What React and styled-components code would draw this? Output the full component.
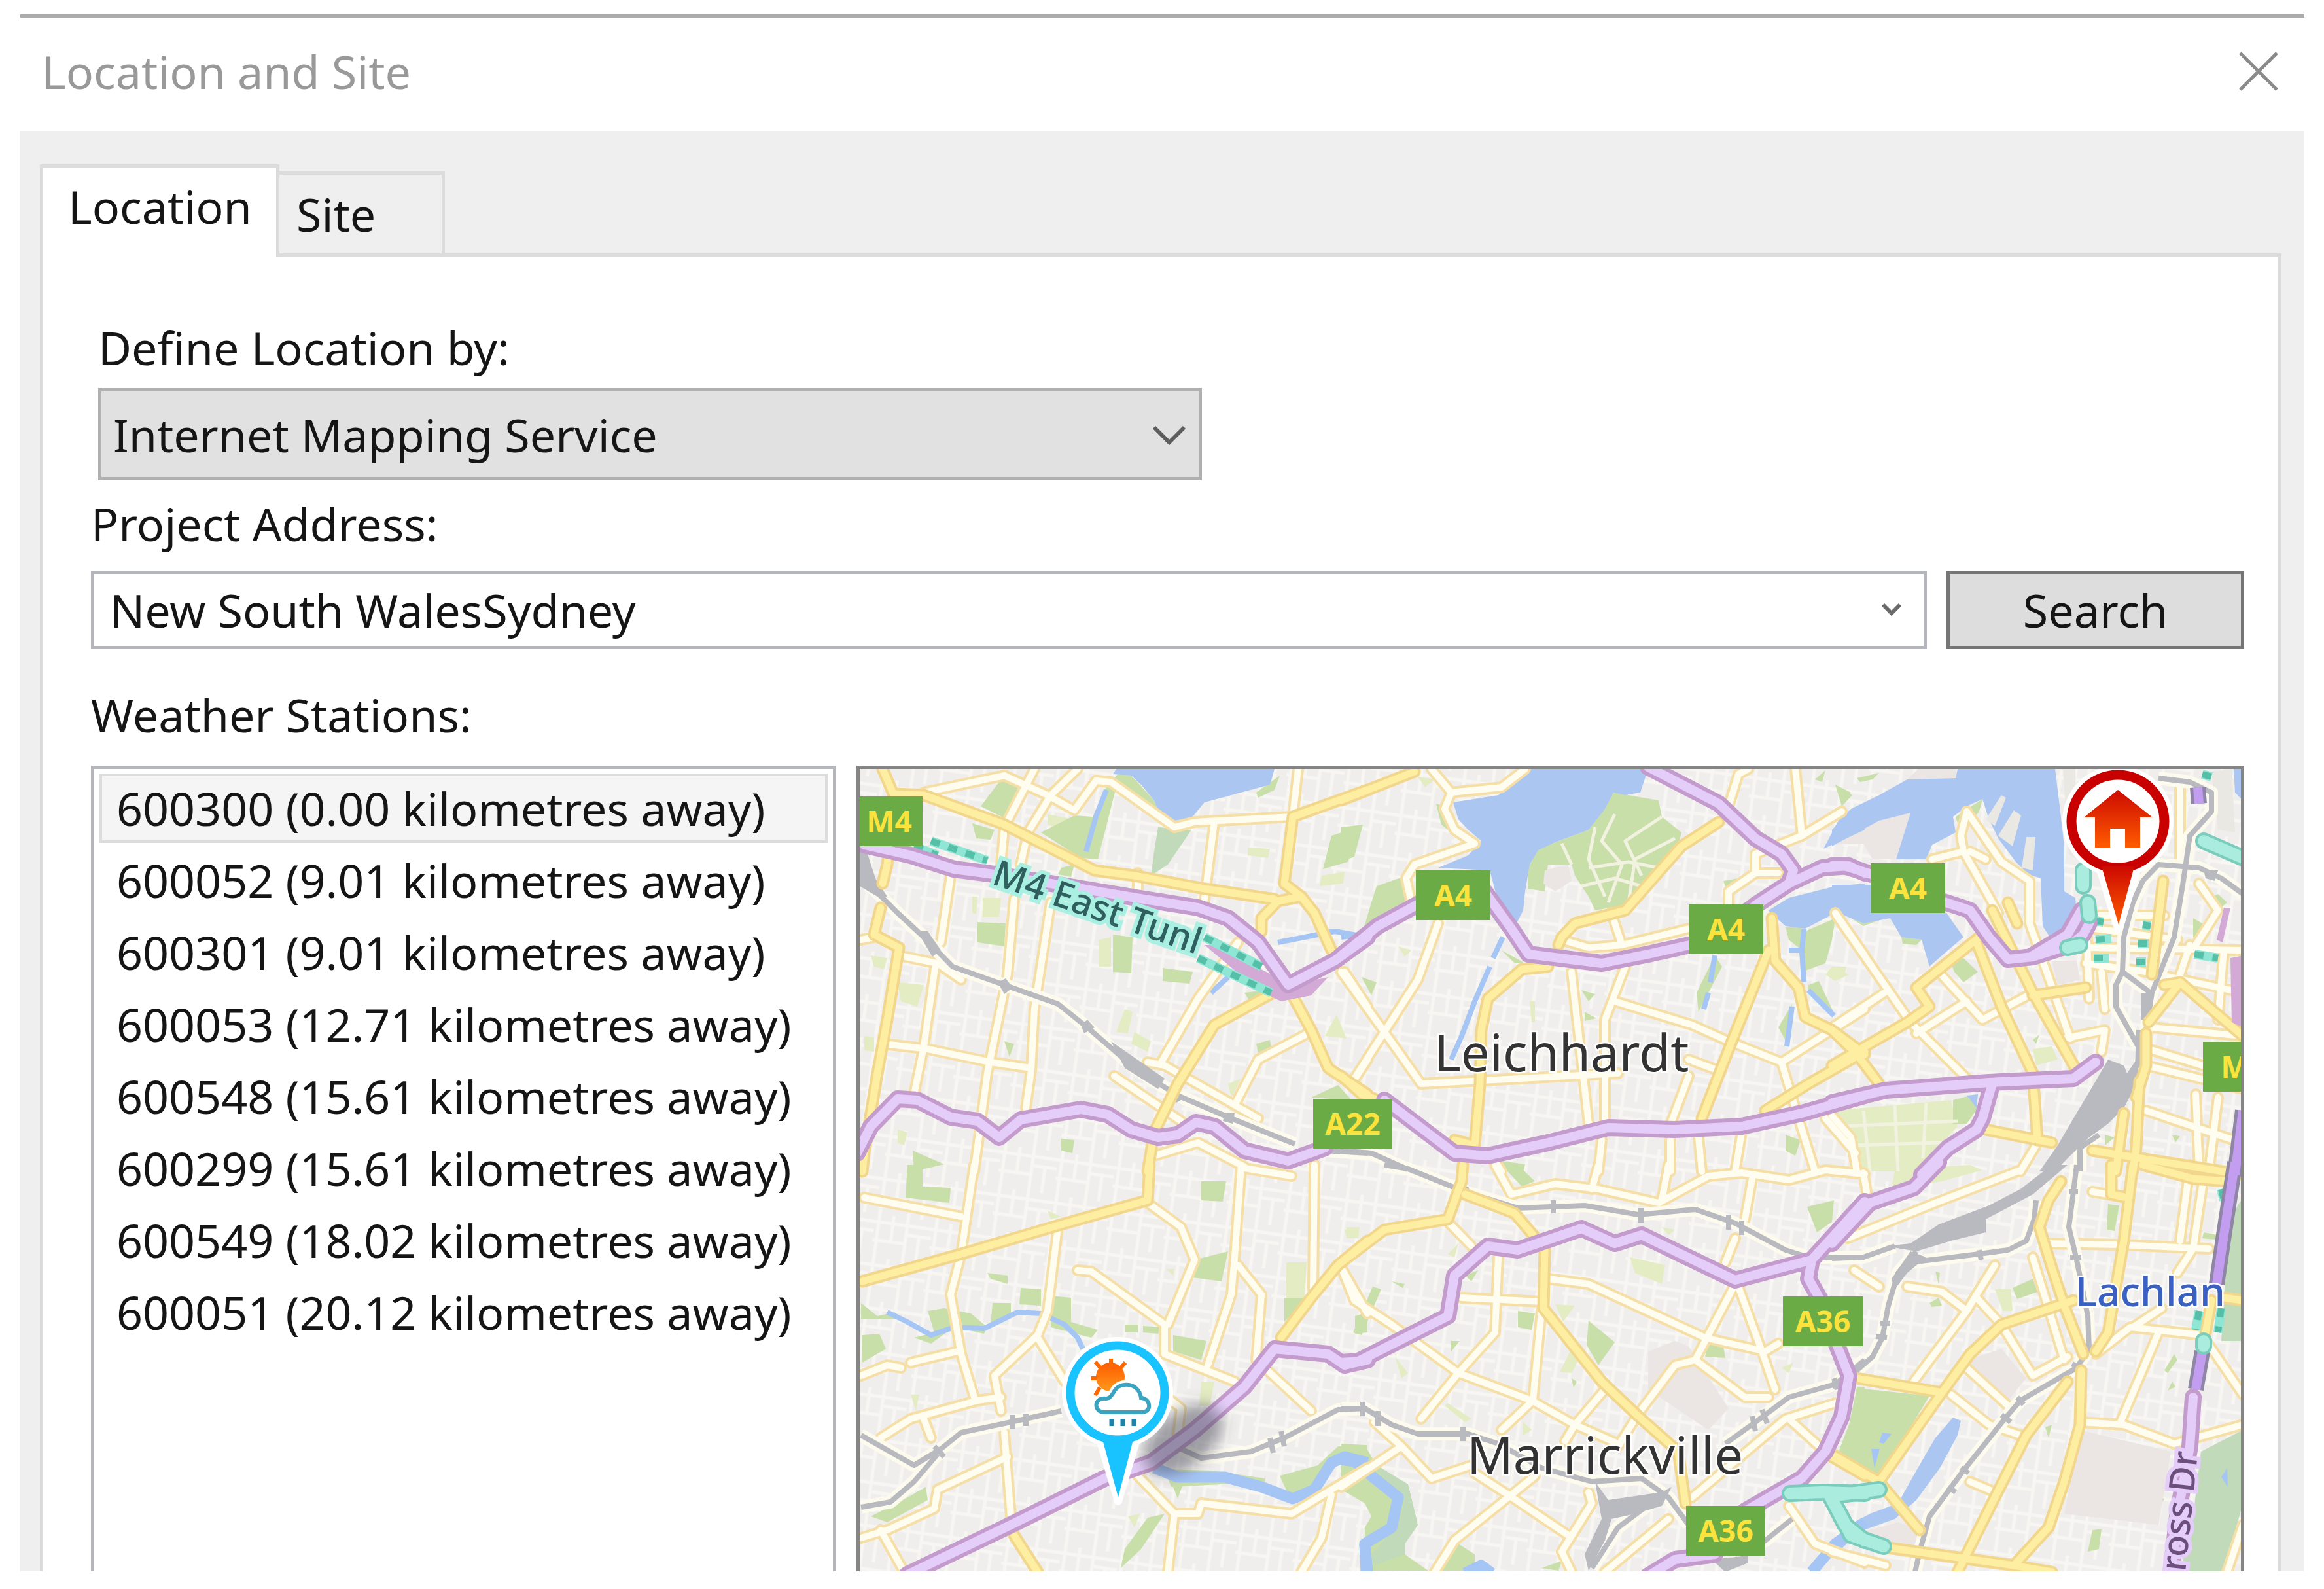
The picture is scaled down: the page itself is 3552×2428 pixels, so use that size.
import { useState } from "react";
import styled, { createGlobalStyle, css } from "styled-components";

const stations = [
    { id: "600300", distance: "0.00" },
    { id: "600052", distance: "9.01" },
    { id: "600301", distance: "9.01" },
    { id: "600053", distance: "12.71" },
    { id: "600548", distance: "15.61" },
    { id: "600299", distance: "15.61" },
    { id: "600549", distance: "18.02" },
    { id: "600051", distance: "20.12" },
];

export default function App() {

    const [service, setService] = useState("Internet Mapping Service");
    const [address, setAddress] = useState("New South WalesSydney");
    const [station, setStation] = useState("600300");

    return (
        <Page>
            <GlobalStyle />
            <Dialog>
                <TitleBar>
                    <Title>Location and Site</Title>
                    <CloseButton type="button" aria-label="Close">
                        <svg width="60" height="60" viewBox="0 0 60 60">
                            <path d="M2 2L58 58M58 2L2 58" stroke="#8a8a8a" strokeWidth="5" />
                        </svg>
                    </CloseButton>
                </TitleBar>
                <Body>
                    <Tabs role="tablist">
                        <Tab type="button" role="tab" aria-selected="true" $active>Location</Tab>
                        <Tab type="button" role="tab" aria-selected="false">Site</Tab>
                    </Tabs>
                    <Panel role="tabpanel">
                        <Service>
                            <Label htmlFor="service">Define Location by:</Label>
                            <SelectBox>
                                <Select id="service" value={service} onChange={(e) => setService(e.target.value)}>
                                    <option>Internet Mapping Service</option>
                                </Select>
                                <SelectArrow width="52" height="34" viewBox="0 0 52 34">
                                    <path d="M3 4L26 27L49 4" fill="none" stroke="#5c5c5c" strokeWidth="6" />
                                </SelectArrow>
                            </SelectBox>
                        </Service>
                        <Address>
                            <Label htmlFor="address">Project Address:</Label>
                            <SearchRow>
                                <Combo>
                                    <Input id="address" value={address} onChange={(e) => setAddress(e.target.value)} />
                                    <ComboButton type="button" aria-label="Recent addresses">
                                        <svg width="32" height="22" viewBox="0 0 32 22">
                                            <path d="M3 3L16 16L29 3" fill="none" stroke="#6b6b6b" strokeWidth="6" />
                                        </svg>
                                    </ComboButton>
                                </Combo>
                                <SearchButton type="button">Search</SearchButton>
                            </SearchRow>
                        </Address>
                        <ListTitle id="stations">Weather Stations:</ListTitle>
                        <Results>
                            <StationList aria-labelledby="stations">
                                {stations.map((s) => (
                                    <li key={s.id}>
                                        <StationButton type="button" $selected={s.id === station} onClick={() => setStation(s.id)}>
                                            {s.id} ({s.distance} kilometres away)
                                        </StationButton>
                                    </li>
                                ))}
                            </StationList>
                            <MapFrame>
                                <StreetMap />
                            </MapFrame>
                        </Results>
                    </Panel>
                </Body>
            </Dialog>
        </Page>
    )
}

// The map is stored in six sheets, each on its own 1568 x 1568 grid
const GRID = 1568;
const sheets = {
    A: [1290, 1150, 800, 640],
    B: [2050, 1150, 800, 640],
    C: [2800, 1150, 752, 640],
    D: [1290, 1780, 800, 648],
    E: [2050, 1780, 800, 648],
    F: [2800, 1780, 752, 648],
};

function project(sheet, points) {
    const [left, top, width, height] = sheets[sheet];
    return points.split(" ").map((p) => {
        const [x, y] = p.split(",").map(Number);
        return `${Math.round(left + x * width / GRID)},${Math.round(top + y * height / GRID)}`;
    }).join(" ");
}

function layer(data) {
    return Object.entries(data).flatMap(([sheet, lines]) => lines.map((l) => project(sheet, l)));
}

const water = layer({
    A: ["870,62 1290,62 1275,120 1160,160 1080,185 1040,245 990,255 940,215 930,180 890,120 860,85 805,80 815,62"],
    B: [
        "560,62 920,62 895,150 850,160 815,150 790,210 740,290 640,335 590,365 565,420 550,520 545,590 525,640 470,560 445,440 290,430 380,385 420,330 380,290 350,250 335,185 470,160",
        "1280,590 1340,545 1480,500 1568,490 1568,600 1480,600 1390,660 1330,650 1285,600",
        "1568,190 1500,230 1445,360 1568,290",
    ],
    C: [
        "400,62 710,62 725,200 740,350 740,520 775,545 780,600 750,660 695,690 672,650 665,470 625,455 585,410 530,320 500,250 480,175 430,200 385,240 395,300 320,345 300,400 205,400 250,225 150,255 0,350 0,290 60,210 150,160 240,100 395,95",
        "0,495 125,495 200,600 365,600 420,690 350,760 310,800 285,700 220,690 185,620 100,640 0,590",
        "1280,62 1310,62 1310,180 1285,150",
        "430,1285 465,1280 460,1330",
    ],
    F: [
        "385,935 410,945 400,1000 345,1120 270,1240 200,1310 90,1355 30,1420 0,1410 40,1340 120,1290 210,1250 270,1130 330,1010",
    ],
});

const ponds = layer({
    F: ["160,990 190,995 165,1030 150,1025", "125,1050 152,1050 135,1120", "1260,1120 1262,1190 1240,1155"],
});

const piers = layer({
    C: ["490,250 540,160 555,170 520,275", "530,310 580,215 602,235 575,350", "605,430 620,315 648,315 640,440", "735,62 775,62 780,400 755,380", "1210,70 1275,62 1285,300 1230,290"],
});

const parks = layer({
    A: [
        "470,100 525,120 480,245 410,200", "385,265 450,290 440,325 395,320",
        "590,300 690,235 745,240 785,130 820,80 860,85 930,180 940,215 815,130 760,400 710,395",
        "1460,310 1550,275 1510,410 1435,435", "400,635 485,640 480,725 400,710",
        "805,680 865,690 860,825 805,820", "955,805 1045,820 1035,865 955,855",
        "1235,150 1305,85 1290,140 1240,170", "1235,1090 1275,1075 1280,1110 1240,1125",
        "205,1490 300,1540 210,1568", "1200,900 1260,890 1215,930", "650,1445 690,1450 685,1500 650,1490",
        "480,1080 510,1090 495,1140", "650,430 690,420 680,465 640,455", "1400,1290 1480,1245 1520,1300",
    ],
    B: [
        "815,150 950,180 960,240 1020,300 1010,350 900,530 850,570 760,590 740,540 700,460 690,420 620,420 610,520 560,510 560,430 590,360 740,290 790,200",
        "105,500 185,465 200,550 65,670 90,560", "0,280 65,270 40,390 0,410",
        "1330,655 1375,655 1390,670 1480,620 1470,700 1450,790 1380,820 1370,730 1340,700",
        "1400,870 1430,855 1475,975 1400,890", "60,840 105,860 90,910", "720,890 760,905 740,930", "730,970 765,995 730,1005",
        "1120,760 1140,800 1070,970 1065,900", "1145,480 1190,470 1160,540", "1310,1030 1350,940 1340,1100",
        "480,740 550,790 520,790", "1330,1430 1375,1450 1360,1510 1330,1490", "480,1530 550,1540 545,1568 490,1568",
        "285,190 310,200 320,290 300,270", "1420,100 1450,65 1440,110", "1480,120 1530,160 1500,200",
    ],
    C: [
        "395,240 480,175 470,220 410,300", "380,790 420,770 465,820 420,860 390,820", "385,1300 440,1285 465,1330 430,1390 385,1390",
        "745,790 770,800 755,835 735,830", "1200,550 1230,530 1260,560 1220,600", "640,1075 660,1055 650,1090",
        "80,95 150,75 130,100 90,110", "10,120 60,150 40,190", "220,690 285,700 270,720 225,715", "1150,620 1180,640 1170,700 1150,690",
        "60,620 100,640 180,615 100,650", "870,1430 900,1440 870,1470", "1085,1430 1110,1435 1095,1460",
    ],
    D: [
        "190,0 235,0 235,80 320,85 315,140 185,120", "1070,60 1145,60 1135,135 1070,130", "1050,350 1150,320 1130,430 1045,415",
        "1320,490 1390,490 1320,580", "50,510 100,560 150,545 180,570 50,570",
        "250,540 300,530 380,550 430,600 420,625 330,600 260,660 210,640 270,620", "445,510 500,510 500,550 440,590",
        "530,455 590,460 590,520 525,515", "620,485 680,490 680,580 760,610 740,640 620,600", "55,630 105,625 125,680 55,730",
        "985,630 1085,650 1070,720 985,690", "840,590 880,590 880,620 840,620", "895,595 950,600 940,625 895,620",
        "80,1300 190,1230 245,1190 250,1240 130,1320", "910,1305 960,1290 890,1420 830,1490 840,1420",
        "960,1125 1100,1130 1260,1160 1260,1180 1130,1180 980,1190", "1305,1150 1420,1110 1480,1040 1568,1035 1568,1100 1470,1080 1400,1200 1330,1220",
        "1500,1200 1568,1170 1568,1240", "1530,560 1568,545 1568,620 1530,625", "430,400 490,410 490,440 440,420", "985,1190 1015,1180 1000,1235",
    ],
    E: [
        "0,1030 70,1035 110,1120 200,1180 230,1330 190,1400 190,1440 260,1500 70,1500 70,1340 90,1300 70,1250 0,1200",
        "350,1400 400,1440 400,1500 300,1500", "740,575 820,655 770,740 735,665", "95,450 120,460 60,630 35,620",
        "530,540 580,550 570,610 530,600", "1395,155 1475,130 1470,210 1425,250", "1100,650 1145,670 1150,715 1090,710",
        "480,0 530,0 580,60 540,80", "150,430 190,440 185,455", "330,650 355,650 330,690", "690,790 705,800 695,825", "600,1490 660,1465 650,1500",
        "1545,820 1568,820 1568,1110 1520,1080", "370,410 410,390 390,430",
    ],
    F: [
        "80,825 310,855 240,990 150,1170 20,1060 55,960", "880,145 915,150 900,245 875,240", "575,455 640,420 655,470 590,495",
        "830,1350 860,1345 850,1420 815,1430", "1060,760 1090,700 1100,720 1070,770", "1070,835 1085,800 1095,820",
        "310,510 340,490 350,520 320,525", "330,395 345,400 340,440", "1185,250 1230,260 1220,275 1180,270", "990,1215 1060,1235 1050,1250 1000,1235",
        "560,800 585,830 550,860", "680,970 700,960 690,1010",
    ],
});

const darkParks = layer({
    A: ["940,280 1040,290 970,420 920,460 930,370"],
    E: ["70,1080 120,1120 200,1180 230,1330 190,1400 190,1440 100,1480 90,1440 170,1330 190,1240 130,1160"],
    F: ["1175,1060 1310,980 1310,1250 1250,1505 1110,1505 1150,1300", "1265,200 1310,120 1310,650 1240,650 1250,500"],
});

const fields = layer({
    A: [
        "385,540 400,540 395,605 385,600", "415,545 470,545 465,615 415,615", "160,860 240,870 220,950 170,930",
        "765,700 800,690 800,800 765,800", "840,960 865,970 850,1050 815,1045", "870,1045 920,1080 910,1120 860,1090",
        "1210,355 1275,360 1270,395 1210,385", "1430,460 1500,445 1495,490 1425,500", "1475,980 1505,1070 1440,1060",
        "610,230 690,250 670,300 610,270", "160,1410 190,1420 180,1470 160,1460", "60,1060 90,1065 90,1120 60,1115", "1150,1240 1190,1220 1160,1290", "80,760 130,770 120,810 90,800",
    ],
    B: ["880,230 940,230 940,400 890,400", "230,90 280,100 250,130", "170,725 210,740 190,765", "1470,800 1520,830 1480,855 1450,830", "595,200 615,215 600,230", "430,310 475,305 470,325", "1520,1360 1568,1330 1568,1420", "565,930 580,930 580,1010 570,1010"],
    C: ["640,1110 700,1100 720,1150 650,1170", "0,1340 380,1300 400,1400 320,1500 260,1568 100,1568 60,1450", "0,800 45,800 40,840 0,850"],
    D: ["1325,360 1385,360 1380,490 1325,490", "1070,800 1110,800 1095,890 1065,890", "1505,230 1545,230 1540,270 1505,270", "965,385 990,385 985,410", "200,850 225,850 215,910", "610,170 650,190 620,200", "850,1300 885,1290 870,1340"],
    E: [
        "640,515 700,520 665,580", "690,680 720,700 690,770 655,765", "865,340 970,370 960,440 880,400", "320,880 390,940 370,950 310,890",
        "160,710 200,770 180,790", "10,240 50,240 45,270 15,265", "960,230 1000,240 980,260", "545,950 570,980 545,1000", "1320,750 1355,730 1340,770", "320,330 350,290 340,340",
    ],
    F: ["520,460 570,460 575,540 545,540", "200,20 440,0 480,20 350,60 190,90"],
});

const blocks = layer({
    B: ["610,440 680,420 690,480 640,520 605,490"],
    C: ["0,345 150,255 250,225 205,400 130,400 100,340", "275,62 395,62 395,95 240,100", "700,780 780,780 790,850 720,870"],
    E: ["920,690 1000,650 1040,670 1160,900 1100,980 920,830"],
    F: ["790,980 1080,1060 1040,1330 740,1290", "430,720 540,680 620,790 560,870", "210,1320 290,1350 270,1430 60,1370"],
});

const creeks = layer({
    A: ["785,140 755,240 725,370", "1300,710 1380,690 1470,670 1568,690", "1150,840 1100,900"],
    B: ["0,690 60,680", "485,690 455,770", "445,800 400,930 360,1060 330,1150", "1400,890 1475,985", "1100,900 1085,960", "1120,760 1105,860", "1385,660 1380,740 1340,740", "1380,740 1385,860", "1350,950 1335,1100"],
    D: ["130,545 190,580 260,630 330,600 420,605 520,545 590,550 660,590 700,640 715,680"],
});

const rivers = layer({
    D: ["930,1120 1000,1155 1140,1155 1250,1190 1345,1235 1410,1200 1460,1100 1500,1080 1568,1100", "1560,1400 1568,1505"],
    E: ["0,1090 40,1095 100,1160 170,1230 150,1340 70,1400 75,1505", "370,1510 420,1480 450,1510", "1568,1320 1480,1400 1410,1505"],
});

const rails = layer({
    A: ["50,400 80,500 160,600 240,690 325,800 480,870 640,940 730,1030 870,1180 1000,1285 1160,1370 1350,1465", "1440,1490 1568,1500"],
    B: ["0,1490 90,1500 200,1560"],
    C: [
        "1000,990 1015,900 925,820 930,690 960,560 990,480 1040,420 1170,430 1240,470 1310,530",
        "1040,95 1140,110 1210,150 1210,220 1140,310 1120,480 1090,690 1020,900 1000,1040 980,1180",
        "925,820 905,870 905,950 975,1100", "790,1568 790,1480 850,1430",
    ],
    D: ["50,1000 210,1110 290,1050 350,990 500,950 650,910", "50,1265 140,1245 210,1170 280,1070", "1010,1050 1070,1085 1220,1060 1320,1010 1480,905 1568,900"],
    E: [
        "130,0 200,15 370,100 530,160 730,150 890,185 1060,165 1180,215 1330,315 1400,340 1568,340",
        "1150,1030 1240,950 1340,860 1480,810 1568,720", "0,900 70,900 150,960 230,995 380,995 470,1030 600,1120 750,1170 900,1160 980,1230 1040,1330",
        "960,1220 830,1340 750,1490", "1350,1310 1270,1390 1180,1440",
    ],
    F: [
        "0,345 100,340 200,300", "780,0 770,100 755,230 780,350 815,560 820,680 780,750 600,870 550,940 420,1130 310,1300 280,1430 265,1505",
        "250,360 470,330 560,315 620,280 645,200 650,130", "270,320 210,400 180,520 160,640 130,710 80,760 0,820",
    ],
});

// Platforms and sidings drawn across the rails
const stops = layer({
    D: ["505,925 505,975", "545,920 545,965", "1275,1010 1285,1065", "1310,985 1320,1040", "270,1040 300,1080"],
    E: ["635,130 635,180", "897,160 897,215", "1160,185 1160,240", "1200,205 1200,260", "65,875 65,930", "110,910 110,965", "365,970 365,1020", "1230,930 1240,985", "1260,905 1275,955", "1475,790 1485,830"],
    F: ["470,315 475,350", "755,100 785,100", "760,340 795,340", "765,735 795,755", "590,860 610,885", "540,925 570,950", "410,1120 435,1140", "370,1190 395,1210", "155,585 185,585", "140,635 175,640"],
});

const yards = layer({
    A: ["47,360 70,380 95,470 130,540 100,540 47,500", "220,670 250,670 290,740 265,765", "460,860 485,845 505,880 480,905", "710,1020 730,1000 750,1030 720,1050", "800,1080 960,1220 940,1260 840,1180", "975,1275 1000,1265 1015,1295 995,1310", "1140,1350 1170,1350 1165,1390 1135,1380"],
    C: ["660,1568 720,1470 770,1370 840,1230 880,1150 930,1170 940,1200 975,1140 975,1230 930,1330 880,1390 820,1440 750,1520 710,1568", "985,900 1015,900 1010,1000 985,1000", "970,1040 1010,1040 1000,1160 965,1180", "1185,440 1230,440 1220,480 1190,470"],
    E: ["760,1170 800,1240 960,1210 990,1190 960,1260 880,1290 810,1310 790,1390 740,1500 730,1440 780,1310", "1110,1460 1220,1445 1220,1470 1150,1505", "350,85 380,80 390,115 365,120"],
    F: ["170,300 250,290 340,220 500,150 600,90 700,0 750,0 640,110 490,200 490,250 380,280 270,320", "250,320 300,340 240,400 200,460 190,420"],
});

const minorRoads = layer({
    A: [
        "240,150 480,85", "480,85 610,160 690,215 755,105 800,110 990,280 1050,260 1340,240", "570,62 480,280 470,420",
        "700,62 620,160 550,300 530,420", "1360,62 1345,240", "1110,260 1080,550", "880,450 880,510", "320,460 290,710",
        "510,550 490,830 430,1200 390,1568", "620,560 570,960 560,1190 545,1330", "50,700 90,690", "165,760 280,790 350,850",
        "275,790 240,1100 210,1280", "120,1090 250,1110 440,1160 560,1180", "1180,710 1060,920 950,1160", "910,1160 960,1170 1240,1370",
        "810,1210 1010,1380", "1390,1050 1240,1150 1175,1310", "1500,820 1568,950", "930,1510 1060,1460 1200,1550", "1568,1150 1520,1240",
    ],
    B: [
        "270,62 330,150 480,130 550,62", "330,150 310,210 340,290 400,340 220,420 195,470 210,560", "290,640 230,850 30,1240",
        "0,820 120,1030 240,1240 830,1200", "690,820 740,1390", "850,800 790,1000 790,1390", "810,600 840,720", "660,700 740,730 840,720 1040,660",
        "820,930 1050,1020 1160,1080 1320,1160 1568,960", "1320,1160 1350,1290 1420,1568", "1040,1210 990,1380", "1040,1150 1130,1190",
        "780,1450 770,1568", "985,1450 985,1568", "1070,1440 1080,1568", "1200,1420 1180,1568", "1220,62 1190,80 1160,200",
        "1360,62 1380,310 1500,220", "1380,310 1240,380 1240,450 1160,520 1160,570", "1240,450 1310,450", "1480,600 1568,760", "460,1530 480,1568", "1450,1370 1540,1500",
    ],
    C: [
        "430,220 410,310 420,370 320,400", "430,220 540,410 630,480 630,640 760,1070", "420,370 530,600", "440,370 490,400",
        "15,610 250,1010 430,1220", "340,820 480,1000 640,900", "0,1030 180,890", "270,1050 430,930", "740,1070 870,1040 860,1120",
        "0,1360 60,1440 80,1568", "840,610 1060,610", "840,660 1100,700", "820,730 1310,740", "810,790 1000,820 1310,900",
        "1020,1030 1310,1060", "1010,1110 1180,1170", "1000,1170 1310,1260", "1000,1340 1280,1450", "1160,1280 1170,1568",
        "1230,1290 1200,1568", "1140,720 1100,860", "1170,490 1230,590 1160,720", "1250,740 1230,1000", "810,560 820,920",
        "860,820 870,960", "600,1568 650,1470", "1110,120 1110,400",
    ],
    D: [
        "390,0 350,330 320,480 350,700 390,860", "60,120 350,190", "640,230 610,540 580,630 450,780 470,910", "580,640 660,800",
        "700,390 740,395 960,590 960,700 1170,800", "910,140 1010,230 1050,350 970,590", "1190,0 1170,340 1160,480 1090,740",
        "1180,370 1250,480 1235,720 1400,910", "1410,0 1405,460", "1190,10 1340,40", "1490,380 1568,550", "50,780 130,740 170,750",
        "200,730 340,690", "110,1010 200,940 400,870 470,860", "240,940 260,1010", "480,990 500,1300", "490,1080 280,1200 270,1270 130,1350 50,1380",
        "110,1350 180,1505", "880,1150 990,1290 970,1505", "990,1290 1060,1290 1070,1250 1340,1290 1568,1120", "1460,1220 1430,1380 1370,1505",
        "980,870 1010,900 1000,1000",
    ],
    E: [
        "0,380 40,500 150,590 350,770 570,870 700,960 830,1030", "320,210 390,300", "470,340 460,620 350,770 240,940", "360,490 600,505",
        "600,540 575,870 480,980", "620,420 740,440 1090,640 1270,690 1310,660", "1180,440 1060,720 1000,740 890,920 830,1040",
        "1190,450 1260,690 1300,830", "1060,720 1210,860 1280,860", "790,830 700,960 670,1020",
        "460,0 510,110 640,70 770,90 950,140 1100,40 1200,30 1340,55 1450,20 1568,35", "770,0 750,90", "980,0 960,130", "1230,50 1210,200",
        "1180,270 1150,360", "100,950 180,1040 270,1160 390,1110", "0,1190 180,1040", "400,1140 500,1220 680,1370", "580,1150 340,1390 280,1505",
        "740,1210 750,1250 660,1430 690,1505", "790,1505 980,1310", "1050,1230 1330,940 1480,880", "1340,940 1440,1050", "1340,1260 1420,1400 1568,1470",
    ],
    F: [
        "100,30 110,100", "240,450 350,470 430,540 460,480 520,370", "430,540 260,800", "460,490 540,590 640,780 750,710",
        "640,340 740,720", "70,390 150,450", "50,270 330,140 600,20", "680,290 920,295 1200,310", "1140,0 1110,280", "1190,0 1150,310 1100,400",
        "830,100 940,120", "790,950 930,960 1090,1030 1310,960", "1040,620 920,950", "840,700 950,600 1180,630 1310,850", "380,850 500,960 600,1000",
        "420,740 560,890", "960,600 1050,530", "0,1430 170,1480", "440,1170 520,1210", "1310,1330 1260,1505",
    ],
});

const mainRoads = layer({
    A: [
        "115,62 150,165 130,420 115,490", "150,155 240,160 480,270 750,440 870,460 1080,510 1290,550",
        "1568,140 1345,240 1320,490 1370,540 1410,600 1460,740", "1370,540 1300,555 1250,620 1250,670", "1330,880 1400,1040 1450,1180 1568,1280",
        "1300,890 1110,1020 1000,1240 930,1420 910,1568", "110,580 90,680 165,730 130,1000 100,1200 60,1500 55,1568",
    ],
    B: [
        "0,180 220,70", "1130,260 1020,350 850,590 700,640 660,690 650,720", "620,800 540,810 440,920 420,1040 415,1240 400,1470 340,1450",
        "1290,620 1300,780 1370,880 1390,990 1470,1040 1568,1130", "1280,740 1170,1080 1080,1370", "1270,1340 1400,1240 1568,1120", "0,1210 60,1280 110,1300",
    ],
    C: [
        "0,1170 240,1010 310,950 270,880 470,690", "510,590 640,900 780,1190", "460,710 540,950 640,1200 655,1450", "640,910 810,880",
        "0,1040 80,1130 150,1240", "490,1410 700,1460", "560,560 590,640", "1060,870 1110,860 1310,1060", "1110,860 1010,1010", "1055,480 1020,830",
        "980,1230 970,1480 960,1568", "930,1350 905,1568", "830,1490 1310,1580", "1000,1050 1000,1170 970,1290",
    ],
    D: ["55,430 350,330 650,220 910,130 915,0", "1568,280 1480,370 1400,490 1310,640", "510,1370 580,1505"],
    E: ["365,0 360,60 320,200 130,240 0,360", "370,110 520,180 610,310 605,530 780,800 890,930 1010,1060 1030,1250", "1470,1080 1568,1150"],
    F: [
        "890,0 890,110 940,120", "960,0 930,280 880,620 840,690", "990,0 1150,50 1260,60", "730,60 690,130 660,230 700,380 740,520 800,700",
        "795,760 790,960 740,1170 690,1340 580,1480", "770,500 540,590 440,700 340,860 150,1170", "80,790 340,840", "0,1070 150,1170 280,1350",
        "750,800 620,1000 520,1230 400,1505", "180,1415 580,1480 700,1505", "1210,500 1190,620", "1250,490 1310,500",
    ],
});

const highways = layer({
    A: [
        "60,345 200,385 330,435 450,455 620,490 900,550 1060,580 1150,620 1240,710 1330,870 1470,780 1568,690",
        "40,1500 80,1400 160,1295 220,1300 320,1365 400,1380 465,1440 530,1375 710,1335 790,1355 860,1410 940,1440 1000,1430 1055,1385 1110,1400 1200,1490 1330,1530 1440,1480",
    ],
    B: [
        "0,760 110,650 240,560", "430,520 510,660 560,755 780,790 920,755 1060,715", "920,55 1130,190 1240,320 1320,380 1355,440 1340,490 1220,590",
        "1240,570 1340,490 1440,430 1520,425 1568,450", "130,1300 340,1500 440,1510 620,1460 800,1405 1000,1410 1200,1400 1380,1350 1568,1285",
    ],
    C: ["0,425 40,425 140,460", "350,555 440,590 500,690 560,775 640,765 760,720 800,680 820,640", "640,760 750,680 795,590", "0,1310 170,1265 500,1235 770,1220 840,1160", "510,1240 480,1370 460,1410 370,1480 285,1580"],
    D: ["1568,720 1500,740 1450,700 1290,680 1200,820 1050,980 920,1100 780,1160 500,1330 190,1515"],
    E: [
        "1568,135 1410,350 1180,425 900,260 820,290 720,235 530,315 440,300 340,410 320,560 50,725 0,730", "1410,350 1400,420 1440,510",
        "1480,650 1520,780 1500,930 1450,1060 1380,1160 1210,1280", "1120,1440 1000,1460 920,1520",
    ],
    F: ["340,-10 260,85 120,140 0,290", "1150,860 1140,1040 1100,1300 1080,1515"],
});

const expressways = layer({
    C: ["1310,1340 1285,1580", "1165,130 1170,190"],
    F: ["1285,-10 1250,260 1225,440", "1180,690 1160,830"],
});

const tunnels = layer({
    C: ["1185,330 1320,400", "800,440 800,500", "815,560 820,610", "750,730 790,720"],
    E: ["1345,1215 1440,1210 1568,1215", "1460,1215 1510,1330 1568,1390"],
    F: ["0,1225 150,1200", "0,1240 20,1280 60,1370 165,1410", "1185,650 1185,670"],
});

const tunnelWalls = layer({
    A: ["180,385 215,385", "210,350 280,385", "260,330 430,405", "1080,690 1250,800", "1060,770 1280,900"],
    C: ["840,630 865,635", "840,700 890,695", "835,770 885,770", "990,645 1015,650", "975,715 1010,715", "970,785 1000,785", "1155,755 1230,770", "1180,80 1210,90"],
    F: ["1240,90 1250,130", "1170,540 1160,610", "1240,530 1230,620"],
});

const ramps = layer({
    A: ["1080,720 1110,720 1340,870 1450,840 1400,910 1310,930 1240,890"],
    C: ["1270,770 1310,760 1310,1030 1275,1010", "1250,580 1270,580 1245,710 1225,700"],
});

const lanes = layer({
    B: ["760,280 740,400 790,540", "820,230 780,330 840,420 800,560", "960,240 850,330 900,460", "1000,320 880,400 860,560", "660,340 690,420", "740,430 860,410 950,430", "720,500 820,470 900,500"],
    C: ["100,1340 120,1568", "200,1320 210,1568", "300,1310 290,1520", "30,1400 400,1380", "60,1470 350,1460"],
});

// Shield: left, top, width, text
const shields = [
    [1308, 1217, 102, "M4"],
    [2164, 1330, 114, "A4"],
    [2581, 1382, 114, "A4"],
    [2859, 1319, 114, "A4"],
    [2007, 1679, 121, "A22"],
    [3367, 1592, 98, "M"],
    [2725, 1981, 122, "A36"],
    [2577, 2301, 121, "A36"],
];

function Lines({ points, color, width, cap = "butt", dash }) {
    return (
        <g fill="none" stroke={color} strokeWidth={width} strokeLinejoin="round" strokeLinecap={cap} strokeDasharray={dash}>
            {points.map((p, i) => <polyline key={i} points={p} />)}
        </g>
    )
}

function Areas({ points, color }) {
    return <g fill={color}>{points.map((p, i) => <polygon key={i} points={p} />)}</g>
}

function StreetMap() {
    return (
        <MapCanvas viewBox="1314 1175 2111 1226" preserveAspectRatio="xMinYMin slice">
            <defs>
                <pattern id="streets" width="88" height="66" patternUnits="userSpaceOnUse" patternTransform="rotate(8)">
                    <rect width="88" height="66" fill="#f0eeec" />
                    <path d="M6 0V66M28 0V40M50 0V66M70 26V66M0 12H88M0 40H50M50 26H88" stroke="#f7f6f3" strokeWidth="5" />
                </pattern>
                <linearGradient id="house" x1="0" y1="0" x2="0" y2="1">
                    <stop offset="0" stopColor="#cc0a00" />
                    <stop offset="1" stopColor="#ff5c00" />
                </linearGradient>
                <linearGradient id="sun" x1="0" y1="0" x2="0" y2="1">
                    <stop offset="0" stopColor="#ff5a00" />
                    <stop offset="1" stopColor="#ff9a1a" />
                </linearGradient>
                <filter id="soft" x="-50%" y="-50%" width="200%" height="200%">
                    <feGaussianBlur stdDeviation="11" />
                </filter>
            </defs>
            <rect x="1314" y="1175" width="2111" height="1300" fill="url(#streets)" />
            <Areas points={fields} color="#e4ecc3" />
            <Areas points={parks} color="#c9dfaa" />
            <Areas points={darkParks} color="#c1dab9" />
            <Areas points={blocks} color="#ebe5e3" />
            <Lines points={lanes} color="#f2f2e0" width="5" />
            <Areas points={water} color="#abc7f1" />
            <Areas points={ponds} color="#a5c5f5" />
            <Areas points={piers} color="#eae8e2" />
            <Lines points={creeks} color="#a5c5f5" width="8" />
            <Lines points={rivers} color="#a5c5f5" width="17" />

            <Lines points={minorRoads} color="#f5dfa6" width="18" cap="round" />
            <Lines points={minorRoads} color="#fffdf0" width="10" cap="round" />
            <Lines points={rails} color="#fdfbee" width="20" />
            <Lines points={rails} color="#b9b9c0" width="8" />
            <Lines points={stops} color="#b9b9c0" width="8" />
            <Areas points={yards} color="#b9b9c0" />
            <Lines points={mainRoads} color="#f1d68c" width="19" cap="round" />
            <Lines points={mainRoads} color="#feeea2" width="11" cap="round" />
            <Areas points={ramps} color="#d3a9d6" />
            <Lines points={tunnelWalls} color="#8fe6d4" width="14" />
            <Lines points={tunnelWalls} color="#56bfa8" width="10" dash="14 14" />
            <Lines points={highways} color="#c49bcd" width="26" cap="round" />
            <Lines points={highways} color="#e4cdf8" width="14" cap="round" />
            <Lines points={expressways} color="#8f86a6" width="24" />
            <Lines points={expressways} color="#c39ef0" width="14" />
            <Lines points={tunnels} color="#7accbc" width="26" cap="round" />
            <Lines points={tunnels} color="#aaecdd" width="18" cap="round" />

            {shields.map(([x, y, w, name]) => (
                <g key={`${x}-${y}`}>
                    <rect x={x} y={y} width={w} height="76" fill="#6aab45" />
                    <ShieldText x={x + w / 2} y={y + 55}>{name}</ShieldText>
                </g>
            ))}

            <Town x="2192" y="1637">Leichhardt</Town>
            <Town x="2242" y="2252">Marrickville</Town>
            <WaterName x="3172" y="1996">Lachlan</WaterName>
            <TunnelName transform="translate(1514 1350) rotate(19)">M4 East Tunl</TunnelName>
            <RoadName transform="translate(3340 2402) rotate(-84)">ross Dr</RoadName>

            <ellipse cx="1808" cy="2200" rx="70" ry="42" transform="rotate(-38 1808 2200)" fill="#4a4a58" opacity="0.5" filter="url(#soft)" />
            <StationPin />
            <HomePin />
        </MapCanvas>
    )
}

function StationPin() {
    return (
        <g>
            <path d="M1680 2196L1709 2294L1738 2196Z" fill="#19c3ff" stroke="#fff" strokeWidth="12" strokeLinejoin="round" />
            <circle cx="1708" cy="2128" r="72" fill="#fff" stroke="#fff" strokeWidth="26" />
            <circle cx="1708" cy="2128" r="72" fill="#fff" stroke="#19c3ff" strokeWidth="13" />
            <path d="M1684 2196L1709 2288L1733 2196Z" fill="#19c3ff" />
            <circle cx="1697" cy="2104" r="22" fill="url(#sun)" />
            <path d="M1698 2088V2076M1682 2090L1674 2081M1713 2090L1720 2082M1677 2106H1667M1681 2120L1674 2132" stroke="#ff6a00" strokeWidth="6" />
            <path
                d="M1688 2158C1671 2158 1671 2135 1690 2137C1697 2137 1699 2132 1703 2126C1711 2110 1741 2112 1744 2136C1758 2136 1762 2158 1745 2158Z"
                fill="#fff" stroke="#fff" strokeWidth="14"
            />
            <path
                d="M1688 2158C1671 2158 1671 2135 1690 2137C1697 2137 1699 2132 1703 2126C1711 2110 1741 2112 1744 2136C1758 2136 1762 2158 1745 2158Z"
                fill="#fff" stroke="#3aa3bf" strokeWidth="6"
            />
            <path d="M1699 2168V2179M1716 2168V2179M1733 2168V2179" stroke="#1c84ab" strokeWidth="7" />
        </g>
    )
}

function HomePin() {
    return (
        <g>
            <path d="M3210 1325L3238 1418L3266 1325Z" fill="#fff" stroke="#fff" strokeWidth="14" strokeLinejoin="round" />
            <circle cx="3237" cy="1255" r="71" fill="#fff" stroke="#fff" strokeWidth="28" />
            <circle cx="3237" cy="1255" r="71" fill="#fff" stroke="#c90000" strokeWidth="15" />
            <path d="M3212 1324L3238 1413L3262 1324Z" fill="url(#house)" />
            <path d="M3237 1207L3290 1249H3271V1295H3248V1266H3225V1295H3202V1249H3185Z" fill="url(#house)" />
        </g>
    )
}

const GlobalStyle = createGlobalStyle`
    * {
        box-sizing: border-box;
    }
    body {
        margin: 0;
        background: #fff;
        color: #151515;
        font-family: "Noto Sans", "Open Sans", sans-serif;
        font-size: 70px;
        line-height: 96px;
    }
    button, input, select {
        margin: 0;
        padding: 0;
        border-radius: 0;
        color: inherit;
        font: inherit;
    }
`;

const Page = styled.div`
    display: flex;
    flex-direction: column;
    min-height: 100vh;
    padding: 22px 30px 27px 31px;
`;

const Dialog = styled.main`
    display: flex;
    flex-direction: column;
    flex: 1;
    border-top: 5px solid #ababab;
`;

const TitleBar = styled.header`
    display: flex;
    align-items: center;
    justify-content: space-between;
    height: 173px;
    padding: 0 40px 10px 33px;
`;

const Title = styled.h1`
    margin: 0;
    color: #999;
    font-size: 70px;
    font-weight: 400;
`;

const CloseButton = styled.button`
    display: flex;
    border: none;
    background: none;
`;

const Body = styled.div`
    display: flex;
    flex-direction: column;
    flex: 1;
    padding: 51px 35px 0 30px;
    background: #efefef;
`;

const Tabs = styled.div`
    display: flex;
    align-items: flex-end;
`;

const Tab = styled.button`
    width: 253px;
    height: 125px;
    padding: 0 26px;
    border: 5px solid #dcdcdc;
    border-width: 5px 5px 0 0;
    background: #efefef;
    text-align: left;

    ${({ $active }) => $active && css`
        position: relative;
        width: 366px;
        height: 141px;
        margin-bottom: -5px;
        padding: 0 20px 18px 38px;
        border-width: 5px 5px 0;
        background: #fff;
    `}
`;

const Panel = styled.section`
    display: flex;
    flex-direction: column;
    flex: 1;
    padding: 91px 52px 0 73px;
    border: 5px solid #dcdcdc;
    border-bottom: none;
    background: #fff;
`;

const Service = styled.div`
    display: flex;
    flex-direction: column;
    gap: 14px;
    max-width: 1698px;
    padding-left: 11px;
`;

const Label = styled.label`
    display: block;
`;

const SelectBox = styled.div`
    position: relative;
`;

const Select = styled.select`
    display: block;
    width: 100%;
    height: 141px;
    padding: 0 100px 0 18px;
    border: 5px solid #b0b0b0;
    background: #e1e1e1;
    appearance: none;
`;

const SelectArrow = styled.svg`
    position: absolute;
    top: 56px;
    right: 24px;
    pointer-events: none;
`;

const Address = styled.div`
    display: flex;
    flex-direction: column;
    gap: 24px;
    margin-top: 18px;
`;

const SearchRow = styled.div`
    display: flex;
    gap: 30px;
    height: 120px;
`;

const Combo = styled.div`
    display: flex;
    flex: 1;
    border: 5px solid #b4b6bc;
    background: #fff;
`;

const Input = styled.input`
    flex: 1;
    min-width: 0;
    padding: 0 24px;
    border: none;
    background: none;
    outline: none;
`;

const ComboButton = styled.button`
    display: flex;
    align-items: center;
    justify-content: center;
    width: 98px;
    border: none;
    background: none;
`;

const SearchButton = styled.button`
    width: 455px;
    border: 5px solid #757575;
    background: #ddd;
`;

const ListTitle = styled.h2`
    margin: 52px 0 30px;
    font-size: 70px;
    font-weight: 400;
`;

const Results = styled.div`
    display: flex;
    flex: 1;
    gap: 31px;
`;

const StationList = styled.ul`
    display: flex;
    flex-direction: column;
    gap: 4px;
    width: 1139px;
    margin: 0;
    padding: 7px 8px;
    border: 5px solid #b4b6bc;
    border-bottom: none;
    list-style: none;
`;

const StationButton = styled.button`
    display: block;
    width: 100%;
    height: 106px;
    padding: 0 22px;
    border: 4px solid ${({ $selected }) => ($selected ? "#dcdcdc" : "transparent")};
    background: ${({ $selected }) => ($selected ? "#f5f5f5" : "none")};
    text-align: left;
    white-space: nowrap;
`;

const MapFrame = styled.div`
    position: relative;
    flex: 1;
    border: 5px solid #858585;
    border-bottom: none;
    overflow: hidden;
`;

const MapCanvas = styled.svg`
    position: absolute;
    inset: 0;
    width: 100%;
    height: 100%;
`;

const ShieldText = styled.text`
    fill: #fbe23c;
    font-size: 46px;
    font-weight: 700;
    text-anchor: middle;
`;

const Town = styled.text`
    fill: #333;
    stroke: #fff;
    stroke-width: 5px;
    paint-order: stroke;
    font-size: 78px;
`;

const WaterName = styled.text`
    fill: #3a60c2;
    stroke: #fff;
    stroke-width: 5px;
    paint-order: stroke;
    font-size: 62px;
    font-weight: 500;
`;

const TunnelName = styled.text`
    fill: #2f5f5f;
    stroke: #aaf0e2;
    stroke-width: 12px;
    paint-order: stroke;
    font-size: 55px;
    font-weight: 500;
`;

const RoadName = styled.text`
    fill: #6d4f7d;
    stroke: #e4cdf8;
    stroke-width: 12px;
    paint-order: stroke;
    font-size: 54px;
    font-weight: 500;
`;
